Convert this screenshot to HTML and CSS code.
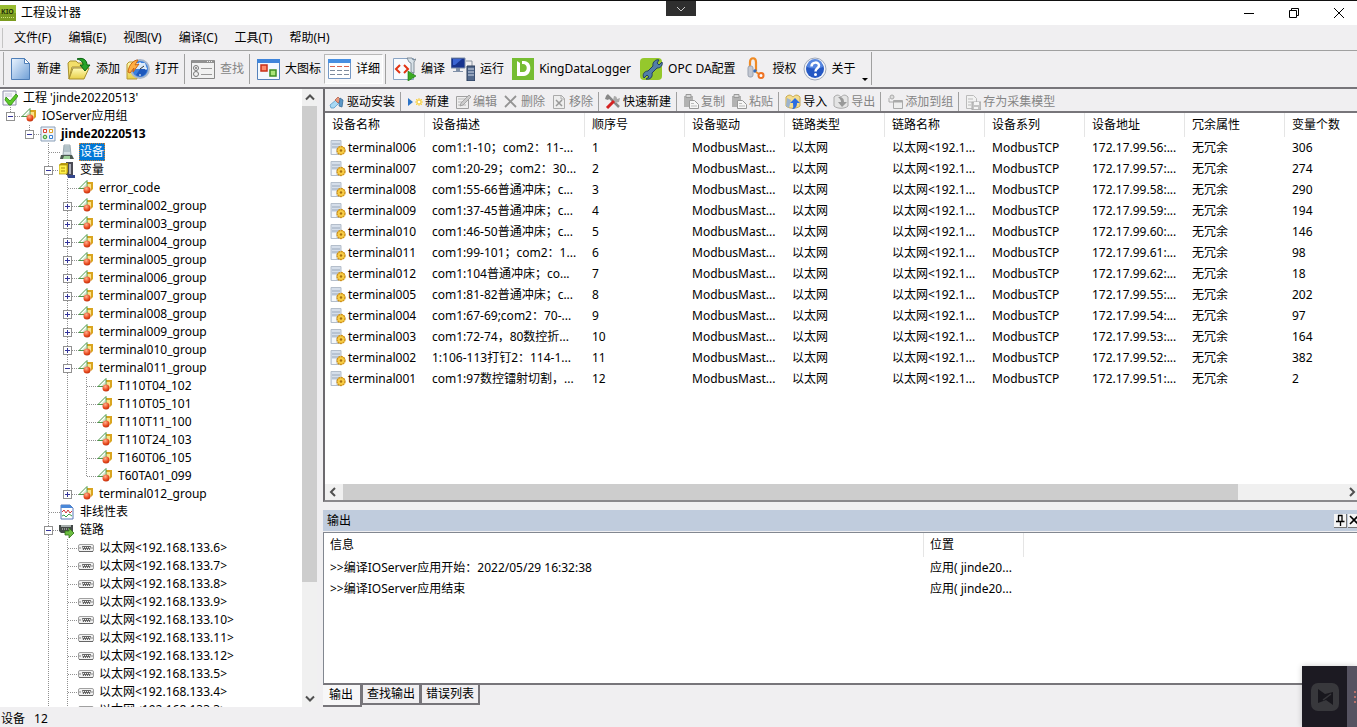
FILE: index.html
```
<!DOCTYPE html>
<html lang="zh-CN">
<head>
    <meta charset="UTF-8">
    <meta name="viewport" content="width=device-width, initial-scale=1.0">
    <title>工程设计器</title>
    <link rel="stylesheet" href="styles.css">
</head>
<body>
    <svg class="sprite" aria-hidden="true">
        <defs>
            <linearGradient id="blue" x1="0" y1="0" x2="1" y2="1"><stop offset="0" stop-color="#eaf4ff"/><stop offset="1" stop-color="#6e9fd6"/></linearGradient>
            <linearGradient id="folder" x1="0" y1="0" x2="0" y2="1"><stop offset="0" stop-color="#fffbb8"/><stop offset="1" stop-color="#e8cf48"/></linearGradient>
            <radialGradient id="ball" cx="0.4" cy="0.3" r="0.8"><stop offset="0" stop-color="#ffb090"/><stop offset="0.6" stop-color="#e8481c"/><stop offset="1" stop-color="#b02808"/></radialGradient>
        </defs>
        <symbol id="i-group" viewBox="0 0 16 16">
            <path d="M7 4l2-2h6v7l-2 2H7z" fill="#d9a520"/><path d="M7 4h6v7H7z" fill="#fbe38a"/>
            <path d="M9 .5v8H1z" fill="#fff" stroke="#4f9a4a"/><path d="M8 4v4H4z" fill="#cdeac8"/>
            <circle cx="9" cy="10" r="3.500" fill="url(#ball)"/>
        </symbol>
        <symbol id="i-project" viewBox="0 0 16 16">
            <path d="M1 1h13v14H1z" fill="#f8f8fc" stroke="#8c8ca8"/><path d="M3 4h7M3 6h7" stroke="#c4c4d8"/>
            <path d="M4 7l4 4 6-7 2 2-7 9h-2L3 10z" fill="#5cc929" stroke="#2f8a12" stroke-width=".8"/>
        </symbol>
        <symbol id="i-app" viewBox="0 0 16 16">
            <path d="M1 1h14v14H1z" fill="#eef2fa" stroke="#8aa0b8"/>
            <path d="M3.500 3.500h3v3h-3z" fill="#fff" stroke="#d84030"/><path d="M9.500 3.500h3v3h-3z" fill="#fff" stroke="#e0a020"/>
            <circle cx="5" cy="11" r="1.800" fill="#bfe8b0" stroke="#3a9a30"/><path d="M9.500 9.500h3v3h-3z" fill="#fff" stroke="#3a80d0"/>
        </symbol>
        <symbol id="i-device" viewBox="0 0 16 16">
            <path d="M5 1h6l1 10H4z" fill="#d5e0e4" stroke="#9caab0"/><path d="M5 3h6M5 5h6M5 7h6" stroke="#8fa4ac"/>
            <path d="M2 11h11l2 4H1z" fill="#4d5a52"/><path d="M5 12h6v3H4z" fill="#9ccf98"/>
        </symbol>
        <symbol id="i-var" viewBox="0 0 16 16">
            <path d="M7 0h7v13H7z" fill="#4b4b55"/><path d="M10 2h2v10h-2z" fill="#aeb0bc"/><path d="M8 13h8v3H9z" fill="#34468c"/>
            <path d="M0 3l2-2h7v9l-2 2H0z" fill="#b89a10"/><path d="M0 3h8v9H0z" fill="#fff04a" stroke="#a88c08" stroke-width=".7"/><path d="M2 6h4M2 9h4" stroke="#a88c08"/>
        </symbol>
        <symbol id="i-curve" viewBox="0 0 16 16">
            <path d="M2 1h9l3 3v11H2z" fill="#fff" stroke="#5a78b8"/><path d="M2 1h9l3 3H2z" fill="#4a88d8"/>
            <path d="M3 8l2-2 2 3 2-3 2 3 2-2" fill="none" stroke="#d03838"/><path d="M3 12l2-1 2 2 3-3 3 2" fill="none" stroke="#38a048"/>
        </symbol>
        <symbol id="i-link" viewBox="0 0 16 16">
            <path d="M0 3h14v8H2L0 9z" fill="#444a48"/><path d="M2 3h10v2H2z" fill="#a8b0ae"/><path d="M3 7h7" stroke="#e0e0e0" stroke-dasharray="1 1"/>
            <path d="M6 9h4V6l5 5-5 5v-3H6z" fill="#6cbc40" stroke="#2f7018" stroke-width=".8"/>
        </symbol>
        <symbol id="i-port" viewBox="0 0 16 16">
            <rect x=".5" y="4.500" width="15" height="7" rx="1.500" fill="#f2f2f2" stroke="#a0a0a0"/><path d="M1 11.500h14" stroke="#666"/>
            <path d="M4 6h9l-1 4H5z" fill="#666"/><path d="M5 7.500h7M6 9.500h5" stroke="#eee" stroke-dasharray="1 1"/><path d="M2 7v2M14 7v2" stroke="#888"/>
        </symbol>
        <symbol id="i-term" viewBox="0 0 16 16">
            <path d="M1 .5h10v14H1z" fill="#d5deea" stroke="#b4becb"/><path d="M2 4h8M2 7h8" stroke="#9aa8bb"/><path d="M2 9h4v5H2z" fill="#f4f7fa"/>
            <circle cx="11" cy="10.500" r="4" fill="#f8cd45" stroke="#cd8f18" stroke-width="1.300" stroke-dasharray="2 .6"/><circle cx="11" cy="10.500" r="1.200" fill="#a87010"/>
        </symbol>

        <symbol id="t-new" viewBox="0 0 24 24"><path d="M3.500 1.500h13l5 5v16h-18z" fill="url(#blue)" stroke="#4f7fb8"/><path d="M16.500 1.500v5h5z" fill="#fff" stroke="#4f7fb8"/></symbol>
        <symbol id="t-add" viewBox="0 0 24 24">
            <path d="M1 6l2-2h6l2 2h7v4H5L2 22z" fill="#f3de6a" stroke="#a8902c"/><path d="M6 11h16l-5 11H2z" fill="url(#folder)" stroke="#a8902c"/>
            <path d="M10 2c6-2 10 1 10 6h3l-5 6-5-6h3c0-3-2-5-6-6z" fill="#28a428" stroke="#0b6110"/>
        </symbol>
        <symbol id="t-open" viewBox="0 0 24 24">
            <path d="M1 7l2-2h8v17H1z" fill="url(#folder)" stroke="#b89a30"/>
            <circle cx="14" cy="12" r="9" fill="#3b80de" stroke="#a7b6cc" stroke-width="2"/><path d="M9 6h10l2 6H9z" fill="#d9e9fa"/><path d="M14 12h7a7 7 0 0 1-11 6z" fill="#1d58bd"/><path d="M14 5v2M14 17v2M7 12h2M19 12h2" stroke="#fff"/><path d="M14 12l4-3" stroke="#333"/>
            <path d="M2 15C3 7 8 3 12 3L9 8l4-1-6 8 1-4-4 5z" fill="#ffae42" stroke="#cd6712"/>
        </symbol>
        <symbol id="t-find" viewBox="0 0 24 24">
            <path d="M.5 3.500h23v18H.5z" fill="#f1f1f1" stroke="#878787"/><path d="M1 3h22v3H1z" fill="#919191"/><path d="M16 4.500h6" stroke="#eee" stroke-dasharray="1 1"/>
            <circle cx="5" cy="11" r="2.500" fill="none" stroke="#777"/><circle cx="5" cy="11" r="1" fill="#777"/><circle cx="5" cy="17" r="2.500" fill="none" stroke="#777"/><path d="M10 11.500h11M10 17.500h11" stroke="#999"/>
        </symbol>
        <symbol id="t-large" viewBox="0 0 24 24">
            <path d="M1.500 2.500h22v20h-22z" fill="#f4f9ff" stroke="#5582bb"/><path d="M1 2h23v4H1z" fill="#3f84da"/>
            <path d="M5 8h6v6H5z" fill="#ff8b6a" stroke="#c9311a" stroke-width="1.500"/><path d="M14 13h6v6h-6z" fill="#a9e478" stroke="#3d8d22" stroke-width="1.500"/>
        </symbol>
        <symbol id="t-detail" viewBox="0 0 24 24">
            <path d="M1.500 2.500h22v19h-22z" fill="#fff" stroke="#7598c5"/><path d="M1 2h23v4H1z" fill="#4890e2"/>
            <path d="M3 9.500h19" stroke="#d76450" stroke-dasharray="5 2"/><path d="M3 13.500h19M3 17.500h19" stroke="#7d8a9c" stroke-dasharray="5 2"/>
        </symbol>
        <symbol id="t-compile" viewBox="0 0 24 24">
            <path d="M1.500 1.500h20v21h-20z" fill="#f8fbff" stroke="#8aa4c4"/><path d="M8 8l-4 4 4 4M12 8l4 4-4 4" fill="none" stroke="#e23414" stroke-width="2"/>
            <path d="M15 1l2 4 2 1v9l3 1V5l2-3-3 1-1-2z" fill="#d8e1e8" stroke="#697886" stroke-width=".8"/><path d="M16 14l8 5-8 5z" fill="#3cac24" stroke="#156e0b" stroke-width=".6"/>
        </symbol>
        <symbol id="t-run" viewBox="0 0 24 24">
            <path d="M0 1h14v10H0z" fill="#17338f" stroke="#8090a8"/><path d="M2 2h9L4 8H2z" fill="#3a64d2"/><path d="M5 11h4v3H5zM2 14h10v1H2z" fill="#8090a8"/>
            <path d="M15 4h6v6" fill="none" stroke="#8a94a0"/><path d="M16 9h8v15h-8z" fill="#53698c" stroke="#293a58"/><path d="M17 12h6M17 15h6M17 18h6" stroke="#d4ddeb"/>
        </symbol>
        <symbol id="t-king" viewBox="0 0 24 24"><path d="M2 1h22v22H2z" fill="#76bd32"/><path d="M7 4l3 2v9h3c5 0 5-8 0-8h-1V4h2c9 0 8 15 0 15H7z" fill="#fff"/></symbol>
        <symbol id="t-opc" viewBox="0 0 24 24">
            <rect x="1" y="1" width="22" height="22" rx="4" fill="#95c82c"/>
            <path d="M20 3c-3-1-7 2-6 6l-5 5c-4 0-6 4-4 7l3-3 2 2-3 2c4 1 7-2 6-6l5-5c4 0 6-3 5-6l-3 3-2-2z" fill="#527fa8" stroke="#233e63"/>
        </symbol>
        <symbol id="t-auth" viewBox="0 0 24 24">
            <path d="M6 12V5c0-5 6-5 6 0v9" fill="none" stroke="#ef8a24" stroke-width="2.200"/><rect x="4" y="9" width="5" height="11" rx="2" fill="#c2c7d2" stroke="#9aa2b0"/><circle cx="11" cy="14" r="1.800" fill="#3468b4"/>
            <path d="M12 15l3 2" stroke="#ef8a24" stroke-width="2"/><circle cx="17" cy="18.500" r="2.500" fill="#fff" stroke="#ef7324" stroke-width="2"/>
        </symbol>
        <symbol id="t-about" viewBox="0 0 24 24">
            <circle cx="12" cy="12" r="11" fill="#f4f6fa" stroke="#a0a8b8"/><circle cx="12" cy="12" r="9" fill="#2558c4"/><path d="M4 10a8 8 0 0 1 16 0q-8 3-16 0z" fill="#5686e0"/>
            <path d="M8.500 9.500c0-5 7.500-5 7.500-1 0 3-3.500 2.500-3.500 6" fill="none" stroke="#fff" stroke-width="2.500"/><circle cx="12.500" cy="17.500" r="1.500" fill="#fff"/>
        </symbol>

        <symbol id="s-driver" viewBox="0 0 16 16"><path d="M1 11l6-5 3 3-5 5H2z" fill="#a8d8f4" stroke="#5a9ac6" stroke-width=".8"/><path d="M6 6l3-3 2 2 2 1-4 3z" fill="#e8987c" stroke="#b5604a" stroke-width=".8"/><path d="M11 4l3 2-1 7-3-1z" fill="#5c98c8" stroke="#386d9b" stroke-width=".8"/></symbol>
        <symbol id="s-new" viewBox="0 0 16 16"><path d="M1 4l5 4-5 4z" fill="#2b73c8"/><path d="M9 5h6v6H9z" fill="#ffe984"/><path d="M9 5l6 6M15 5l-6 6M12 4v8M8 8h8" stroke="#f0cc60"/><path d="M11 7h2v2h-2z" fill="#fff"/></symbol>
        <symbol id="s-edit" viewBox="0 0 16 16"><path d="M1.500 2.500h12v12h-12z" fill="#eee" stroke="#a0a0a0"/><path d="M3 5h8M3 8h4M3 11h8" stroke="#bbb"/><path d="M6 9l8-8 2 2-8 8-3 1z" fill="#ccc" stroke="#999" stroke-width=".8"/></symbol>
        <symbol id="s-del" viewBox="0 0 16 16"><path d="M2 2l11 11M13 2L2 13" stroke="#949494" stroke-width="1.800"/></symbol>
        <symbol id="s-remove" viewBox="0 0 16 16"><path d="M2.500 1.500h8l3 3v10h-11z" fill="#eee" stroke="#aaa"/><path d="M10 1v4h4" fill="none" stroke="#aaa"/><path d="M5 6l6 6M11 6l-6 6" stroke="#999" stroke-width="1.500"/></symbol>
        <symbol id="s-quick" viewBox="0 0 16 16"><path d="M2 1l12 12" stroke="#888" stroke-width="2.500"/><path d="M9 2c2 0 3 1 3 3l3-1-1 4-4 1-2-3z" fill="#aaa"/><path d="M1 2c2-2 4 0 4 2L3 6 0 5z" fill="#888"/><path d="M9 7l-7 7" stroke="#d42222" stroke-width="3"/></symbol>
        <symbol id="s-copy" viewBox="0 0 16 16"><path d="M1 2h9v11H1z" fill="#b2b2b2"/><path d="M3 .5h5v3H3z" fill="#d8d8d8" stroke="#999"/><path d="M6.500 6.500h5l4 4v4h-9z" fill="#f6f6f6" stroke="#999"/><path d="M8 9.500h3M8 12h6" stroke="#bbb"/></symbol>
        <symbol id="s-import" viewBox="0 0 16 16"><path d="M1 3c3-3 5-2 7 0 2-2 4-3 7 0v9c-3 3-11 3-14 0z" fill="#f3dd90" stroke="#c9aa50"/><path d="M2 4l4 2-2 8-3-2z" fill="#9cb3ce"/><path d="M10 4l5 5h-3c0 4-2 6-5 6 2-1 1-3 1-6H5z" fill="#2c6de0"/></symbol>
        <symbol id="s-export" viewBox="0 0 16 16"><path d="M1 3c3-3 5-2 7 0 2-2 4-3 7 0v9c-3 3-11 3-14 0z" fill="#e4e4e4" stroke="#aaa"/><path d="M5 3c5 0 6 2 6 5h3l-5 5-4-5h3c0-2-1-3-3-5z" fill="#999"/></symbol>
        <symbol id="s-group" viewBox="0 0 16 16"><circle cx="5" cy="3" r="2" fill="#ddd" stroke="#aaa"/><path d="M2 4v4h4" fill="none" stroke="#aaa"/><path d="M6.500 6.500h9v8h-9z" fill="#eee" stroke="#aaa"/><path d="M7 7.500h8" stroke="#aaa" stroke-width="2"/></symbol>
        <symbol id="s-save" viewBox="0 0 16 16"><path d="M1.500 1.500h7l3 3v10h-10z" fill="#f2f2f2" stroke="#bbb"/><path d="M3 5h5M3 8h4M3 11h3" stroke="#bbb"/><path d="M7 8h9v8H7z" fill="#c4c4c4" stroke="#aaa"/><path d="M9 8h5v3H9zM9 13h4v2H9z" fill="#f5f5f5"/></symbol>
    </svg>

    <header class="titlebar">
        <svg class="logo" viewBox="0 0 16 16"><path d="M0 0h16v16H0z" fill="#7c9c20"/><path d="M0 0h16v8H0z" fill="#98bb30"/><text x="1" y="9" font-size="7" font-weight="bold" fill="#26330b">KIO</text><path d="M1 12.500h13" stroke="#cde27c" stroke-dasharray="1 1"/></svg>
        <h1>工程设计器</h1>
        <div class="window-buttons">
            <button aria-label="最小化"><svg viewBox="0 0 12 12"><path d="M1 6.500h10" stroke="#000"/></svg></button>
            <button aria-label="还原"><svg viewBox="0 0 12 12"><path d="M1.500 3.500h7v7h-7zM3.500 3V1.500h7v7H9" fill="none" stroke="#000"/></svg></button>
            <button aria-label="关闭"><svg viewBox="0 0 12 12"><path d="M1 1l10 10M11 1L1 11" stroke="#000"/></svg></button>
        </div>
        <button class="pull-tab" aria-label="显示"><svg viewBox="0 0 10 6"><path d="M1 1l4 4 4-4" fill="none" stroke="#ccc"/></svg></button>
    </header>

    <nav class="menubar">
        <button>文件(F)</button>
        <button>编辑(E)</button>
        <button>视图(V)</button>
        <button>编译(C)</button>
        <button>工具(T)</button>
        <button>帮助(H)</button>
    </nav>

    <div class="toolbar-row">
        <div class="toolbar">
            <button><svg><use href="#t-new"/></svg>新建</button>
            <button><svg><use href="#t-add"/></svg>添加</button>
            <button><svg><use href="#t-open"/></svg>打开</button>
            <span class="sep"></span>
            <button disabled><svg><use href="#t-find"/></svg>查找</button>
            <span class="sep"></span>
            <button><svg><use href="#t-large"/></svg>大图标</button>
            <button class="pressed"><svg><use href="#t-detail"/></svg>详细</button>
            <span class="sep"></span>
            <button><svg><use href="#t-compile"/></svg>编译</button>
            <button><svg><use href="#t-run"/></svg>运行</button>
            <button class="product"><svg><use href="#t-king"/></svg>KingDataLogger</button>
            <button class="product"><svg><use href="#t-opc"/></svg>OPC DA配置</button>
            <button><svg><use href="#t-auth"/></svg>授权</button>
            <button><svg><use href="#t-about"/></svg>关于</button>
            <span class="overflow-arrow"></span>
        </div>
    </div>

    <main class="workspace">
        <aside class="tree-pane">
            <div class="tree">
                <div class="row root"><svg><use href="#i-project"/></svg><span>工程 'jinde20220513'</span></div>
                <ul>
                    <li>
                        <div class="row"><button class="toggle minus" aria-label="折叠"></button><svg><use href="#i-group"/></svg><span>IOServer应用组</span></div>
                        <ul>
                            <li>
                                <div class="row"><button class="toggle minus" aria-label="折叠"></button><svg><use href="#i-app"/></svg><b>jinde20220513</b></div>
                                <ul>
                                    <li><div class="row"><svg><use href="#i-device"/></svg><span class="selected">设备</span></div></li>
                                    <li>
                                        <div class="row"><button class="toggle minus" aria-label="折叠"></button><svg><use href="#i-var"/></svg><span>变量</span></div>
                                        <ul>
                                            <li><div class="row"><svg><use href="#i-group"/></svg><span>error_code</span></div></li>
                                            <li><div class="row"><button class="toggle" aria-label="展开"></button><svg><use href="#i-group"/></svg><span>terminal002_group</span></div></li>
                                            <li><div class="row"><button class="toggle" aria-label="展开"></button><svg><use href="#i-group"/></svg><span>terminal003_group</span></div></li>
                                            <li><div class="row"><button class="toggle" aria-label="展开"></button><svg><use href="#i-group"/></svg><span>terminal004_group</span></div></li>
                                            <li><div class="row"><button class="toggle" aria-label="展开"></button><svg><use href="#i-group"/></svg><span>terminal005_group</span></div></li>
                                            <li><div class="row"><button class="toggle" aria-label="展开"></button><svg><use href="#i-group"/></svg><span>terminal006_group</span></div></li>
                                            <li><div class="row"><button class="toggle" aria-label="展开"></button><svg><use href="#i-group"/></svg><span>terminal007_group</span></div></li>
                                            <li><div class="row"><button class="toggle" aria-label="展开"></button><svg><use href="#i-group"/></svg><span>terminal008_group</span></div></li>
                                            <li><div class="row"><button class="toggle" aria-label="展开"></button><svg><use href="#i-group"/></svg><span>terminal009_group</span></div></li>
                                            <li><div class="row"><button class="toggle" aria-label="展开"></button><svg><use href="#i-group"/></svg><span>terminal010_group</span></div></li>
                                            <li>
                                                <div class="row"><button class="toggle minus" aria-label="折叠"></button><svg><use href="#i-group"/></svg><span>terminal011_group</span></div>
                                                <ul>
                                                    <li><div class="row"><svg><use href="#i-group"/></svg><span>T110T04_102</span></div></li>
                                                    <li><div class="row"><svg><use href="#i-group"/></svg><span>T110T05_101</span></div></li>
                                                    <li><div class="row"><svg><use href="#i-group"/></svg><span>T110T11_100</span></div></li>
                                                    <li><div class="row"><svg><use href="#i-group"/></svg><span>T110T24_103</span></div></li>
                                                    <li><div class="row"><svg><use href="#i-group"/></svg><span>T160T06_105</span></div></li>
                                                    <li><div class="row"><svg><use href="#i-group"/></svg><span>T60TA01_099</span></div></li>
                                                </ul>
                                            </li>
                                            <li><div class="row"><button class="toggle" aria-label="展开"></button><svg><use href="#i-group"/></svg><span>terminal012_group</span></div></li>
                                        </ul>
                                    </li>
                                    <li><div class="row"><svg><use href="#i-curve"/></svg><span>非线性表</span></div></li>
                                    <li class="more">
                                        <div class="row"><button class="toggle minus" aria-label="折叠"></button><svg><use href="#i-link"/></svg><span>链路</span></div>
                                        <ul>
                                            <li><div class="row"><svg><use href="#i-port"/></svg><span>以太网&lt;192.168.133.6&gt;</span></div></li>
                                            <li><div class="row"><svg><use href="#i-port"/></svg><span>以太网&lt;192.168.133.7&gt;</span></div></li>
                                            <li><div class="row"><svg><use href="#i-port"/></svg><span>以太网&lt;192.168.133.8&gt;</span></div></li>
                                            <li><div class="row"><svg><use href="#i-port"/></svg><span>以太网&lt;192.168.133.9&gt;</span></div></li>
                                            <li><div class="row"><svg><use href="#i-port"/></svg><span>以太网&lt;192.168.133.10&gt;</span></div></li>
                                            <li><div class="row"><svg><use href="#i-port"/></svg><span>以太网&lt;192.168.133.11&gt;</span></div></li>
                                            <li><div class="row"><svg><use href="#i-port"/></svg><span>以太网&lt;192.168.133.12&gt;</span></div></li>
                                            <li><div class="row"><svg><use href="#i-port"/></svg><span>以太网&lt;192.168.133.5&gt;</span></div></li>
                                            <li><div class="row"><svg><use href="#i-port"/></svg><span>以太网&lt;192.168.133.4&gt;</span></div></li>
                                            <li><div class="row"><svg><use href="#i-port"/></svg><span>以太网&lt;192.168.133.3&gt;</span></div></li>
                                        </ul>
                                    </li>
                                </ul>
                            </li>
                        </ul>
                    </li>
                </ul>
            </div>
            <div class="vscroll">
                <svg viewBox="0 0 15 16"><path d="M4 10l4-4 4 4" fill="none" stroke="#505050" stroke-width="2"/></svg>
                <div class="thumb"></div>
                <svg viewBox="0 0 15 16"><path d="M4 6l4 4 4-4" fill="none" stroke="#505050" stroke-width="2"/></svg>
            </div>
        </aside>

        <div class="content">
            <section class="devices">
                <div class="toolbar small">
                    <button><svg><use href="#s-driver"/></svg>驱动安装</button>
                    <span class="sep"></span>
                    <button><svg><use href="#s-new"/></svg>新建</button>
                    <button disabled><svg><use href="#s-edit"/></svg>编辑</button>
                    <button disabled><svg><use href="#s-del"/></svg>删除</button>
                    <button disabled><svg><use href="#s-remove"/></svg>移除</button>
                    <span class="sep"></span>
                    <button><svg><use href="#s-quick"/></svg>快速新建</button>
                    <span class="sep"></span>
                    <button disabled><svg><use href="#s-copy"/></svg>复制</button>
                    <button disabled><svg><use href="#s-copy"/></svg>粘贴</button>
                    <span class="sep"></span>
                    <button><svg><use href="#s-import"/></svg>导入</button>
                    <button disabled><svg><use href="#s-export"/></svg>导出</button>
                    <span class="sep"></span>
                    <button disabled><svg><use href="#s-group"/></svg>添加到组</button>
                    <span class="sep"></span>
                    <button disabled><svg><use href="#s-save"/></svg>存为采集模型</button>
                </div>
                <div class="table-wrap">
                    <table class="device-table">
                        <colgroup><col><col class="wide"><col><col><col><col><col><col><col><col></colgroup>
                        <thead>
                            <tr><th>设备名称</th><th>设备描述</th><th>顺序号</th><th>设备驱动</th><th>链路类型</th><th>链路名称</th><th>设备系列</th><th>设备地址</th><th>冗余属性</th><th>变量个数</th></tr>
                        </thead>
                        <tbody>
                            <tr><td><svg><use href="#i-term"/></svg>terminal006</td><td>com1:1-10；com2：11-...</td><td>1</td><td>ModbusMast...</td><td>以太网</td><td>以太网&lt;192.1...</td><td>ModbusTCP</td><td>172.17.99.56:...</td><td>无冗余</td><td>306</td></tr>
                            <tr><td><svg><use href="#i-term"/></svg>terminal007</td><td>com1:20-29；com2：30...</td><td>2</td><td>ModbusMast...</td><td>以太网</td><td>以太网&lt;192.1...</td><td>ModbusTCP</td><td>172.17.99.57:...</td><td>无冗余</td><td>274</td></tr>
                            <tr><td><svg><use href="#i-term"/></svg>terminal008</td><td>com1:55-66普通冲床；c...</td><td>3</td><td>ModbusMast...</td><td>以太网</td><td>以太网&lt;192.1...</td><td>ModbusTCP</td><td>172.17.99.58:...</td><td>无冗余</td><td>290</td></tr>
                            <tr><td><svg><use href="#i-term"/></svg>terminal009</td><td>com1:37-45普通冲床；c...</td><td>4</td><td>ModbusMast...</td><td>以太网</td><td>以太网&lt;192.1...</td><td>ModbusTCP</td><td>172.17.99.59:...</td><td>无冗余</td><td>194</td></tr>
                            <tr><td><svg><use href="#i-term"/></svg>terminal010</td><td>com1:46-50普通冲床；c...</td><td>5</td><td>ModbusMast...</td><td>以太网</td><td>以太网&lt;192.1...</td><td>ModbusTCP</td><td>172.17.99.60:...</td><td>无冗余</td><td>146</td></tr>
                            <tr><td><svg><use href="#i-term"/></svg>terminal011</td><td>com1:99-101；com2：1...</td><td>6</td><td>ModbusMast...</td><td>以太网</td><td>以太网&lt;192.1...</td><td>ModbusTCP</td><td>172.17.99.61:...</td><td>无冗余</td><td>98</td></tr>
                            <tr><td><svg><use href="#i-term"/></svg>terminal012</td><td>com1:104普通冲床；co...</td><td>7</td><td>ModbusMast...</td><td>以太网</td><td>以太网&lt;192.1...</td><td>ModbusTCP</td><td>172.17.99.62:...</td><td>无冗余</td><td>18</td></tr>
                            <tr><td><svg><use href="#i-term"/></svg>terminal005</td><td>com1:81-82普通冲床；c...</td><td>8</td><td>ModbusMast...</td><td>以太网</td><td>以太网&lt;192.1...</td><td>ModbusTCP</td><td>172.17.99.55:...</td><td>无冗余</td><td>202</td></tr>
                            <tr><td><svg><use href="#i-term"/></svg>terminal004</td><td>com1:67-69;com2：70-...</td><td>9</td><td>ModbusMast...</td><td>以太网</td><td>以太网&lt;192.1...</td><td>ModbusTCP</td><td>172.17.99.54:...</td><td>无冗余</td><td>97</td></tr>
                            <tr><td><svg><use href="#i-term"/></svg>terminal003</td><td>com1:72-74，80数控折...</td><td>10</td><td>ModbusMast...</td><td>以太网</td><td>以太网&lt;192.1...</td><td>ModbusTCP</td><td>172.17.99.53:...</td><td>无冗余</td><td>164</td></tr>
                            <tr><td><svg><use href="#i-term"/></svg>terminal002</td><td>1:106-113打钉2：114-1...</td><td>11</td><td>ModbusMast...</td><td>以太网</td><td>以太网&lt;192.1...</td><td>ModbusTCP</td><td>172.17.99.52:...</td><td>无冗余</td><td>382</td></tr>
                            <tr><td><svg><use href="#i-term"/></svg>terminal001</td><td>com1:97数控镭射切割，...</td><td>12</td><td>ModbusMast...</td><td>以太网</td><td>以太网&lt;192.1...</td><td>ModbusTCP</td><td>172.17.99.51:...</td><td>无冗余</td><td>2</td></tr>
                        </tbody>
                    </table>
                </div>
                <div class="hscroll">
                    <svg viewBox="0 0 16 16"><path d="M10 4L6 8l4 4" fill="none" stroke="#505050" stroke-width="2"/></svg>
                    <div class="track"><div class="thumb"></div></div>
                    <svg viewBox="0 0 16 16"><path d="M9 4l4 4-4 4" fill="none" stroke="#505050" stroke-width="2"/></svg>
                </div>
            </section>

            <section class="output">
                <div class="output-title">
                    <h2>输出</h2>
                    <button aria-label="固定"><svg viewBox="0 0 12 12"><path d="M4 1.500h4.500M4.500 1v6M8 1v6M2 7.500h8.500M6.500 8v4" fill="none" stroke="#000" stroke-width="1.300"/></svg></button>
                    <button aria-label="关闭输出"><svg viewBox="0 0 12 12"><path d="M2 2l8 8M10 2l-8 8" stroke="#000" stroke-width="1.600"/></svg></button>
                </div>
                <div class="output-list">
                    <table class="output-table">
                        <colgroup><col class="info"><col class="place"></colgroup>
                        <thead><tr><th>信息</th><th>位置</th></tr></thead>
                        <tbody>
                            <tr><td>&gt;&gt;编译IOServer应用开始：2022/05/29 16:32:38</td><td>应用( jinde20...</td></tr>
                            <tr><td>&gt;&gt;编译IOServer应用结束</td><td>应用( jinde20...</td></tr>
                        </tbody>
                    </table>
                </div>
                <div class="tabs">
                    <button class="active">输出</button>
                    <button>查找输出</button>
                    <button>错误列表</button>
                </div>
            </section>
        </div>
    </main>

    <footer class="statusbar"><span>设备</span><span>12</span></footer>

    <div class="recorder">
        <svg viewBox="0 0 30 30"><rect x="1" y="1" width="28" height="28" rx="7" fill="#38383c"/><path d="M8 7l7 5 8-2v13l-7-5-8 3z" fill="#18171d"/><path d="M13 18l8-6" stroke="#38383c" stroke-width="1.500"/></svg>
        <div class="handle"><i></i><i></i><i></i></div>
    </div>
</body>
</html>
```
FILE: styles.css
```
* {
    box-sizing: border-box;
}

body {
    display: flex;
    flex-direction: column;
    height: 100vh;
    margin: 0;
    overflow: hidden;
    background-color: #f0eff1;
    color: #000;
    font-family: "Noto Sans", "Noto Sans CJK SC", sans-serif;
    font-size: 12px;
    line-height: 18px;
}

button {
    border: none;
    padding: 0;
    background: none;
    color: inherit;
    font: inherit;
    white-space: nowrap;
}

button:disabled {
    color: #858585;
}

svg {
    flex: none;
    display: block;
}

ul {
    list-style: none;
    margin: 0;
    padding: 0;
}

.sprite {
    position: absolute;
    width: 0;
    height: 0;
}

/* title bar and menu */
.titlebar {
    position: relative;
    display: flex;
    align-items: center;
    height: 25px;
    border-top: 1px solid #111;
    background-color: #fff;
}

.logo {
    width: 16px;
    height: 16px;
}

.titlebar h1 {
    flex: 1;
    margin: 0 0 0 5px;
    font-size: 12px;
    font-weight: normal;
}

.window-buttons {
    display: flex;
}

.window-buttons button {
    display: flex;
    justify-content: center;
    width: 45px;
    padding-left: 8px;
}

.window-buttons svg {
    width: 12px;
    height: 12px;
}

.pull-tab {
    position: absolute;
    top: 0;
    left: calc(50% - 13px);
    display: flex;
    justify-content: center;
    align-items: center;
    width: 30px;
    height: 15px;
    background-color: #2f2f2f;
}

.pull-tab svg {
    width: 10px;
    height: 6px;
}

.menubar {
    display: flex;
    align-items: center;
    gap: 1px;
    height: 26px;
    padding-left: 2px;
    border-bottom: 1px solid #a0a0a0;
}

.menubar::before {
    content: "";
    width: 1px;
    height: 20px;
    margin-right: 2px;
    background-color: #c4c4c4;
}

.menubar button {
    padding: 0 8px;
}

/* toolbars */
.toolbar-row {
    height: 38px;
    padding: 1px 0 2px 3px;
    border-bottom: 2px solid #77757a;
}

.toolbar {
    display: flex;
    align-items: center;
}

.toolbar-row .toolbar {
    width: fit-content;
    height: 33px;
    padding: 0 3px 0 1px;
    border-left: 1px solid #a8a8a8;
    border-right: 1px solid #a0a0a0;
}

.toolbar button {
    display: flex;
    align-items: center;
    gap: 5px;
    height: 30px;
    padding: 0 3px;
}

.toolbar .product {
    padding-right: 5px;
}

.toolbar svg {
    width: 24px;
    height: 24px;
}

.toolbar .sep {
    width: 1px;
    height: 30px;
    margin: 0 3px 0 2px;
    background-color: #a0a0a0;
}

.toolbar .pressed {
    border: 1px solid #b8b8b8;
    border-right-color: #fff;
    border-bottom-color: #fff;
    padding: 0 2px;
    background-color: #f8f8f9;
}

.overflow-arrow {
    align-self: flex-end;
    margin: 0 0 4px 3px;
    border: 3px solid transparent;
    border-top-color: #000;
    border-bottom: none;
}

.toolbar.small {
    height: 24px;
    padding: 3px 1px 0;
    border-bottom: 2px solid #77757a;
}

.toolbar.small button {
    gap: 2px;
    height: 19px;
}

.toolbar.small svg {
    width: 16px;
    height: 16px;
}

.toolbar.small .sep {
    height: 19px;
    margin: 0 3px 0 2px;
}

/* project tree */
.workspace {
    display: flex;
    flex: 1;
    min-height: 0;
}

.tree-pane {
    display: flex;
    width: 317px;
    margin-right: 6px;
    background-color: #fff;
}

.tree {
    flex: 1;
    overflow: hidden;
}

.tree > ul {
    padding-left: 1px;
}

.tree ul ul {
    padding-left: 19px;
}

.tree li {
    background: repeating-linear-gradient(to bottom, #909090 0 1px, transparent 1px 2px) 9px 0 / 1px 100% no-repeat;
}

.tree li:last-child:not(.more) {
    background-size: 1px 10px;
}

.row {
    display: flex;
    align-items: center;
    height: 18px;
    padding-left: 20px;
    background: repeating-linear-gradient(to right, #909090 0 1px, transparent 1px 2px) 10px 9px / 12px 1px no-repeat;
    white-space: nowrap;
}

.row.root {
    padding-left: 2px;
    background: none;
}

.row svg {
    width: 16px;
    height: 16px;
    margin-right: 4px;
}

.row span,
.row b {
    padding: 0 1px;
}

.row .selected {
    outline: 1px dotted #d08030;
    outline-offset: -1px;
    background-color: #0078d7;
    color: #fff;
}

.toggle {
    width: 9px;
    height: 9px;
    margin: 0 6px 0 -15px;
    border: 1px solid #919191;
    background: linear-gradient(#34349a, #34349a) center / 5px 1px no-repeat,
        linear-gradient(#34349a, #34349a) center / 1px 5px no-repeat, #fff;
}

.toggle.minus {
    background: linear-gradient(#34349a, #34349a) center / 5px 1px no-repeat, #fff;
}

.vscroll {
    display: flex;
    flex-direction: column;
    justify-content: space-between;
    width: 15px;
    background-color: #f0f0f0;
}

.vscroll svg {
    width: 15px;
    height: 17px;
}

.vscroll .thumb {
    height: 77%;
    margin-bottom: auto;
    background-color: #cdcdcd;
}

/* device list */
.content {
    display: flex;
    flex: 1;
    flex-direction: column;
    min-width: 0;
}

.devices {
    display: flex;
    flex: 1;
    flex-direction: column;
    min-height: 0;
    border-left: 2px solid #6c6a6e;
    border-bottom: 2px solid #8a888c;
    background-color: #fff;
}

.devices .toolbar {
    flex: none;
    background-color: #f0eff1;
}

.table-wrap {
    flex: 1;
    overflow: hidden;
}

table {
    border-collapse: separate;
    border-spacing: 0;
    table-layout: fixed;
}

th,
td {
    height: 21px;
    padding: 0 0 0 7px;
    overflow: hidden;
    font-weight: normal;
    text-align: left;
    white-space: nowrap;
}

th {
    height: 24px;
    border-right: 1px solid #e5e5e5;
}

.device-table {
    width: 1060px;
}

.device-table col {
    width: 100px;
}

.device-table .wide {
    width: 160px;
}

.device-table td:first-child {
    padding-left: 5px;
}

.device-table td svg {
    display: inline-block;
    width: 16px;
    height: 16px;
    margin-right: 2px;
    vertical-align: middle;
}

.hscroll {
    display: flex;
    height: 16px;
    background-color: #f0f0f0;
}

.hscroll svg {
    width: 16px;
    height: 16px;
}

.hscroll .track {
    flex: 1;
}

.hscroll .thumb {
    width: calc(100% - 105px);
    height: 16px;
    margin-left: 2px;
    background-color: #cdcdcd;
}

/* output pane */
.output {
    display: flex;
    flex-direction: column;
    height: 197px;
    margin-top: 8px;
}

.output-title {
    display: flex;
    align-items: center;
    height: 21px;
    margin-right: -4px;
    background-color: #c0ccdd;
}

.output-title h2 {
    flex: 1;
    margin: 0 0 0 4px;
    font-size: 12px;
    font-weight: normal;
}

.output-title button {
    height: 14px;
    margin-left: 1px;
    border-right: 1px solid #777;
    border-bottom: 1px solid #777;
    background-color: #f4f4f4;
}

.output-title svg {
    width: 12px;
    height: 12px;
}

.output-list {
    flex: 1;
    margin-top: 1px;
    border: 1px solid #828790;
    border-right: none;
    border-bottom: 2px solid #77757a;
    background-color: #fff;
}

.output-table {
    width: 700px;
}

.output-table .info {
    width: 600px;
}

.output-table th,
.output-table td {
    padding-left: 6px;
}

.tabs {
    display: flex;
    height: 22px;
}

.tabs button {
    height: 20px;
    padding: 0 4px;
    border: 1px solid #77757a;
    border-top: none;
    border-right-width: 2px;
    border-bottom-width: 2px;
}

.tabs .active {
    height: 22px;
    padding: 0 7px 0 6px;
    border-left: none;
    background-color: #f7f7f8;
}

.statusbar {
    display: flex;
    align-items: center;
    gap: 9px;
    height: 20px;
    padding: 4px 0 0 1px;
}

/* floating recorder in the corner of the desktop */
.recorder {
    position: absolute;
    right: 0;
    bottom: 0;
    display: flex;
    align-items: center;
    width: 55px;
    height: 61px;
    background-color: #1c1a22;
    box-shadow: 0 0 6px rgba(0, 0, 0, 0.2);
}

.recorder svg {
    width: 30px;
    height: 30px;
    margin: 0 7px 0 8px;
}

.handle {
    display: flex;
    flex: 1;
    flex-direction: column;
    align-items: flex-end;
    justify-content: center;
    gap: 3px;
    height: 61px;
    padding-right: 1px;
    background-color: #565361;
}

.handle i {
    width: 2px;
    height: 2px;
    background-color: #b8716c;
}
```
